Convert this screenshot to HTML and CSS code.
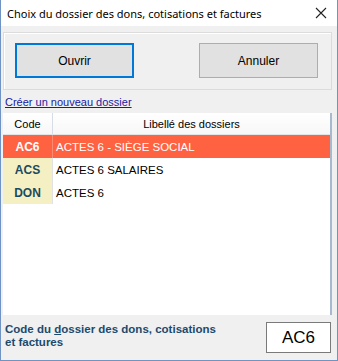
FILE: index.html
```html
<!DOCTYPE html>
<html lang="fr">
<head>
    <meta charset="UTF-8">
    <title>Choix du dossier</title>
    <link rel="stylesheet" href="styles.css">
</head>
<body>
    <div class="window">
        <div class="title-bar">
            <span class="title">Choix du dossier des dons, cotisations et factures</span>
            <svg class="close" width="12" height="12" viewBox="0 0 12 12">
                <path d="M1 1 L11 11 M11 1 L1 11" stroke="#222" stroke-width="1.1" fill="none"/>
            </svg>
        </div>

        <div class="button-box">
            <button class="btn btn-default">Ouvrir</button>
            <button class="btn">Annuler</button>
        </div>

        <a class="new-link" href="#">Créer un nouveau dossier</a>

        <div class="grid">
            <div class="grid-head">
                <div class="col-code">Code</div>
                <div class="col-label">Libellé des dossiers</div>
            </div>
            <div class="grid-row selected">
                <div class="col-code">AC6</div>
                <div class="col-label">ACTES 6 - SIÈGE SOCIAL</div>
            </div>
            <div class="grid-row">
                <div class="col-code">ACS</div>
                <div class="col-label">ACTES 6 SALAIRES</div>
            </div>
            <div class="grid-row">
                <div class="col-code">DON</div>
                <div class="col-label">ACTES 6</div>
            </div>
        </div>

        <div class="footer">
            <div class="footer-label">Code du <u>d</u>ossier des dons, cotisations<br>et factures</div>
            <div class="code-box">AC6</div>
        </div>
    </div>
</body>
</html>
```

FILE: styles.css
```css
body {
    margin: 0;
    padding: 0;
    font-family: "Liberation Sans", Arial, sans-serif;
    font-size: 11px;
    background: #ffffff;
}

.window {
    width: 338px;
    height: 361px;
    box-sizing: border-box;
    border: 1px solid #6f93c2;
    border-top: none;
    background-color: #f0f0f0;
    display: flex;
    flex-direction: column;
}

.title-bar {
    height: 26px;
    flex-shrink: 0;
    background-color: #ffffff;
    display: flex;
    align-items: center;
    justify-content: space-between;
    padding: 0 10px 0 6px;
    font-family: "Noto Sans", "Open Sans", sans-serif;
    font-size: 11px;
    color: #000;
}

.close {
    display: block;
}

.button-box {
    margin: 6px 5px 0 2px;
    height: 58px;
    box-sizing: border-box;
    border: 1px solid #dcdcdc;
    box-shadow: inset 1px 1px 0 #ffffff;
    display: flex;
    justify-content: space-between;
    align-items: flex-start;
    padding: 10px 13px 0 11px;
}

.btn {
    width: 119px;
    height: 35px;
    box-sizing: border-box;
    background-color: #e1e1e1;
    border: 1px solid #adadad;
    font-family: "Liberation Sans", Arial, sans-serif;
    font-size: 12px;
    color: #000;
    padding: 0;
}

.btn-default {
    border: 2px solid #0078d7;
}

.new-link {
    margin: 6px 0 0 4px;
    height: 14px;
    color: #1a1aa0;
    text-decoration: underline;
    font-size: 11px;
}

.grid {
    margin: 3px 5px 0 2px;
    flex: 1;
    background-color: #ffffff;
    border-right: 2px solid #a7b9cf;
    box-sizing: border-box;
}

.grid-head,
.grid-row {
    display: grid;
    grid-template-columns: 50px 1fr;
}

.grid-head {
    height: 22px;
    border-bottom: 1px solid #e3e3e3;
    background: linear-gradient(#ffffff, #f7f7f7);
    box-sizing: border-box;
}

.grid-head div {
    display: flex;
    align-items: center;
    justify-content: center;
    color: #000;
}

.grid-head .col-code {
    border-right: 1px solid #d6dde6;
}

.grid-row {
    height: 23px;
}

.grid-row div {
    display: flex;
    align-items: center;
}

.grid-row .col-code {
    justify-content: center;
    background-color: #f5f0c4;
    color: #1b4a60;
    font-weight: bold;
    font-size: 12px;
    border-right: 1px solid #e2e2e2;
}

.grid-row .col-label {
    padding-left: 3px;
    font-size: 11.5px;
    color: #000;
}

.grid-row.selected .col-code,
.grid-row.selected .col-label {
    background-color: #ff6240;
    color: #ffffff;
}

.grid-row.selected .col-code {
    border-right: 1px solid #ff8a70;
}

.footer {
    height: 45px;
    flex-shrink: 0;
    display: flex;
    justify-content: space-between;
    align-items: flex-start;
    padding: 7px 6px 0 4px;
    box-sizing: border-box;
}

.footer-label {
    margin-top: 1px;
    font-weight: bold;
    font-size: 11.5px;
    line-height: 13px;
    color: #1c4a6e;
}

.code-box {
    width: 65px;
    height: 31px;
    box-sizing: border-box;
    border: 1px solid #7a7a7a;
    background-color: #ffffff;
    display: flex;
    align-items: center;
    justify-content: center;
    font-size: 17px;
    color: #000;
}
```
